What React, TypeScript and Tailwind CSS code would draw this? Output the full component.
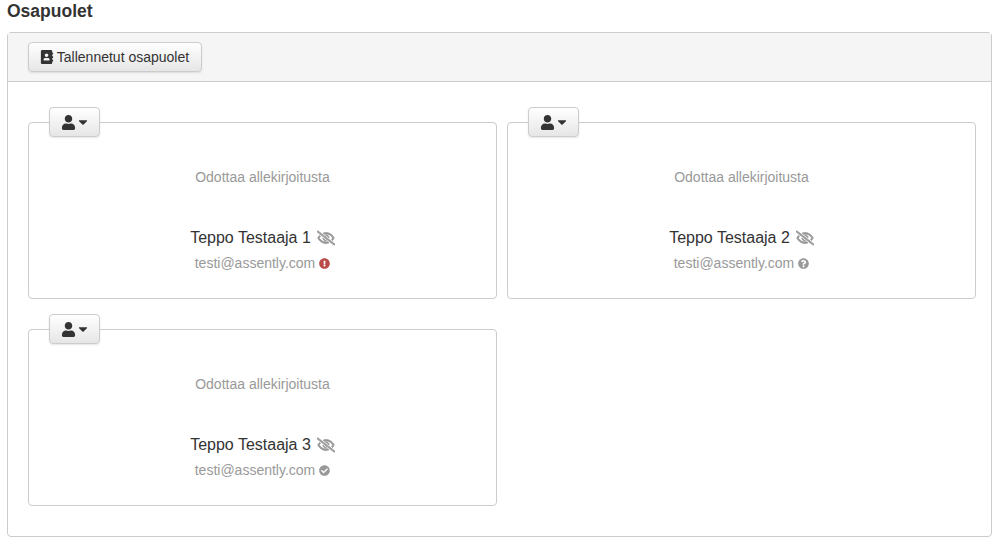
import { FaAddressBook, FaUser, FaCaretDown, FaRegEyeSlash, FaExclamationCircle, FaQuestionCircle, FaCheckCircle } from "react-icons/fa";
import type { ReactNode } from "react";

function Card({ name, icon }: { name: string; icon: ReactNode }) {
  return (
    <div className="relative h-[177px] rounded-[4px] border border-[#cccccc] bg-white">
      <button className="absolute left-[20px] top-[-16px] flex h-[30px] w-[51px] items-center justify-center gap-0 rounded-[4px] border border-[#cccccc] bg-gradient-to-b from-white to-[#e6e6e6] pl-[2px] text-[#333333] shadow-[0_1px_2px_rgba(0,0,0,0.1)]">
        <FaUser className="text-[15px]" />
        <FaCaretDown className="text-[14px]" />
      </button>
      <div className="flex flex-col items-center">
        <div className="mt-[44px] h-[20px] text-[14px] leading-[20px] text-[#999999]">Odottaa allekirjoitusta</div>
        <div className="mt-[41px] flex h-[20px] items-center gap-[6px] text-[16px] leading-[20px] text-[#333333]">
          <span>{name}</span>
          <FaRegEyeSlash className="text-[18px] text-[#999999] stroke-[#999999] stroke-[30px]" />
        </div>
        <div className="mt-[5px] flex h-[20px] items-center gap-[4px] text-[14px] leading-[20px] text-[#999999]">
          <span>testi@assently.com</span>
          {icon}
        </div>
      </div>
    </div>
  );
}

export default function App() {
  return (
    <div className="h-[546px] w-[998px] overflow-hidden bg-white px-[7px] font-['Liberation_Sans',Arial,sans-serif]">
      <h2 className="h-[32px] pt-[1px] text-[17.5px] leading-[20px] font-bold text-[#333333]">Osapuolet</h2>
      <div className="h-[505px] w-[985px] rounded-[4px] border border-[#cccccc]">
        <div className="flex h-[49px] items-center border-b border-[#cccccc] bg-[#f5f5f5] px-[20px]">
          <button className="flex h-[30px] w-[174px] items-center justify-center gap-[3px] rounded-[4px] border border-[#cccccc] bg-gradient-to-b from-white to-[#e6e6e6] pr-[1px] text-[14px] text-[#333333] shadow-[0_1px_2px_rgba(0,0,0,0.1)]">
            <FaAddressBook className="text-[14px]" />
            <span>Tallennetut osapuolet</span>
          </button>
        </div>
        <div className="grid grid-cols-[469px_469px] gap-x-[10px] gap-y-[30px] px-[20px] pt-[40px]">
          <Card name="Teppo Testaaja 1" icon={<FaExclamationCircle className="text-[11px] text-[#b94a48]" />} />
          <Card name="Teppo Testaaja 2" icon={<FaQuestionCircle className="text-[11px] text-[#999999]" />} />
          <Card name="Teppo Testaaja 3" icon={<FaCheckCircle className="text-[11px] text-[#999999]" />} />
        </div>
      </div>
    </div>
  );
}
